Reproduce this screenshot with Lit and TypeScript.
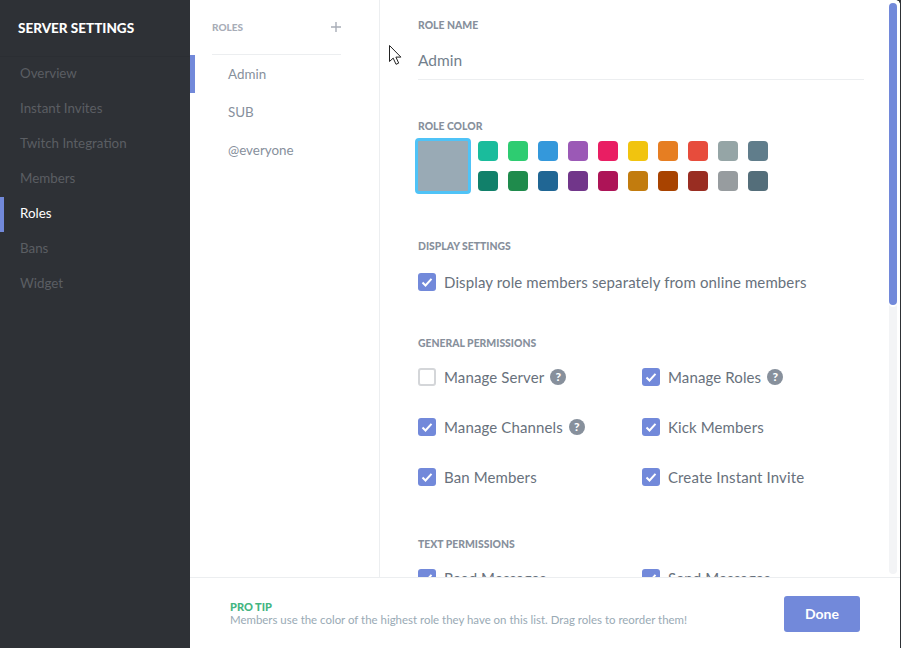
import { LitElement, html, css, svg } from 'lit';
import { customElement } from 'lit/decorators.js';

const NAV = ['Overview', 'Instant Invites', 'Twitch Integration', 'Members', 'Roles', 'Bans', 'Widget'];
const ROLES = ['Admin', 'SUB', '@everyone'];
const COLORS = [
  ['#1abc9c', '#2ecc71', '#3498db', '#9b59b6', '#e91e63', '#f1c40f', '#e67e22', '#e74c3c', '#95a5a6', '#607d8b'],
  ['#11806a', '#1f8b4c', '#206694', '#71368a', '#ad1457', '#c27c0e', '#a84300', '#992d22', '#979c9f', '#546e7a'],
];
const GENERAL = [
  { label: 'Manage Server', checked: false, help: true },
  { label: 'Manage Roles', checked: true, help: true },
  { label: 'Manage Channels', checked: true, help: true },
  { label: 'Kick Members', checked: true, help: false },
  { label: 'Ban Members', checked: true, help: false },
  { label: 'Create Instant Invite', checked: true, help: false },
];
const TEXT = [
  { label: 'Read Messages', checked: true, help: false },
  { label: 'Send Messages', checked: true, help: false },
];

type Perm = { label: string; checked: boolean; help: boolean };

@customElement('app-root')
export class AppRoot extends LitElement {
  static styles = css`
    :host {
      display: block;
      width: 901px;
      height: 648px;
      font-family: Lato, 'Open Sans', sans-serif;
      overflow: hidden;
    }
    .app {
      position: relative;
      display: flex;
      height: 648px;
      background: #fff;
      border-right: 1px solid #2e3136;
      box-sizing: border-box;
    }
    .sidebar {
      width: 190px;
      flex: none;
      background: #2e3136;
    }
    .brand {
      height: 57px;
      box-sizing: border-box;
      padding: 19px 0 0 18px;
      font-size: 13.5px;
      line-height: 18px;
      font-weight: 900;
      color: #fff;
      border-bottom: 1px solid #2b2e33;
    }
    .nav-item {
      height: 35px;
      box-sizing: border-box;
      padding-left: 20px;
      font-size: 13.35px;
      line-height: 33px;
      color: #5b5e63;
    }
    .nav-item.active {
      color: #fff;
      border-left: 4px solid #7289da;
      padding-left: 16px;
    }
    .roles {
      width: 190px;
      flex: none;
      box-sizing: border-box;
      border-right: 1px solid #eceef0;
      padding-top: 18px;
    }
    .roles-head {
      display: flex;
      justify-content: space-between;
      align-items: center;
      height: 37px;
      box-sizing: border-box;
      margin: 0 38px 0 22px;
      padding-bottom: 18px;
      border-bottom: 1px solid #eceef0;
      font-size: 10px;
      font-weight: 900;
      color: #a8adb7;
    }
    .role {
      height: 38px;
      box-sizing: border-box;
      padding-left: 38px;
      font-size: 13.4px;
      line-height: 38px;
      color: #87909c;
    }
    .role.active {
      border-left: 5px solid #7289da;
      padding-left: 33px;
    }
    .main {
      flex: 1;
      min-width: 0;
      padding: 18px 36px 0 38px;
    }
    .label {
      font-size: 10.4px;
      line-height: 14px;
      font-weight: 900;
      color: #87909c;
    }
    .name {
      height: 48px;
      box-sizing: border-box;
      border-bottom: 1px solid #eceef0;
      padding-top: 11px;
      font-size: 15.5px;
      line-height: 34px;
      color: #737f8d;
    }
    .color-label {
      margin-top: 39px;
    }
    .colors {
      display: flex;
      gap: 7px;
      margin: 5px 0 0 -3px;
    }
    .current {
      width: 50px;
      height: 50px;
      border: 3px solid #4fc3f7;
      border-radius: 4px;
      background: #99aab5;
    }
    .swatches {
      display: grid;
      grid-template-columns: repeat(10, 20px);
      grid-auto-rows: 20px;
      gap: 10px;
      padding-top: 3px;
    }
    .swatch {
      border-radius: 4px;
    }
    .display-label {
      margin-top: 45px;
    }
    .check-row {
      display: flex;
      align-items: center;
      height: 18px;
      font-size: 15px;
      letter-spacing: 0.12px;
      color: #68717c;
    }
    .box {
      width: 18px;
      height: 18px;
      margin-right: 8px;
      flex: none;
      box-sizing: border-box;
      border-radius: 3px;
      background: #7289da;
    }
    .box svg {
      display: block;
    }
    .box.off {
      background: #fff;
      border: 2px solid #d4d6d9;
    }
    .help {
      width: 16px;
      height: 16px;
      margin-left: 6px;
      border-radius: 50%;
      background: #87909c;
      color: #fff;
      font-size: 12px;
      line-height: 16px;
      font-weight: 900;
      text-align: center;
    }
    .display-row {
      margin-top: 20px;
    }
    .general-label {
      margin-top: 45px;
    }
    .text-label {
      margin-top: 51px;
    }
    .perms {
      display: grid;
      grid-template-columns: 224px 1fr;
      row-gap: 32px;
      margin-top: 18px;
    }
    .footer {
      position: absolute;
      left: 190px;
      right: 0;
      bottom: 0;
      height: 71px;
      display: flex;
      align-items: center;
      justify-content: space-between;
      box-sizing: border-box;
      padding: 0 40px;
      background: #fff;
      border-top: 1px solid #eceef0;
    }
    .tip {
      margin-top: 1px;
    }
    .tip-title {
      font-size: 11px;
      line-height: 11px;
      font-weight: 900;
      color: #43b581;
    }
    .tip-text {
      padding-top: 1px;
      font-size: 11.45px;
      line-height: 14px;
      color: #99aab5;
    }
    .done {
      width: 76px;
      height: 36px;
      margin-top: 1px;
      border-radius: 3px;
      background: #7289da;
      color: #fff;
      font-size: 14px;
      font-weight: 700;
      line-height: 36px;
      text-align: center;
    }
    .scroll {
      position: absolute;
      top: 3px;
      right: 3px;
      width: 8px;
      height: 571px;
      border-radius: 4px;
      background: #f3f4f6;
    }
    .thumb {
      height: 302px;
      border-radius: 4px;
      background: #7289da;
      box-shadow: 0 2px 0 #fff;
    }
    .corner {
      position: absolute;
      top: 0;
      right: 0;
      width: 4px;
      height: 4px;
      background: radial-gradient(circle at 0 100%, transparent 3.5px, #2e3136 4px);
    }
    .cursor {
      position: absolute;
      left: 388px;
      top: 44px;
    }
  `;

  private tick() {
    return svg`<svg width="18" height="18" viewBox="0 0 18 18"><path d="M4.500 9.500 7.500 12.500 13.500 5.800" fill="none" stroke="#fff" stroke-width="2"/></svg>`;
  }

  private renderPerm(p: Perm) {
    return html`
      <div class="check-row">
        <div class="box ${p.checked ? '' : 'off'}">${p.checked ? this.tick() : ''}</div>
        <span>${p.label}</span>
        ${p.help ? html`<div class="help">?</div>` : ''}
      </div>
    `;
  }

  render() {
    return html`
      <div class="app">
        <div class="sidebar">
          <div class="brand">SERVER SETTINGS</div>
          ${NAV.map((n) => html`<div class="nav-item ${n === 'Roles' ? 'active' : ''}">${n}</div>`)}
        </div>
        <div class="roles">
          <div class="roles-head">
            <span>ROLES</span>
            <svg width="10" height="10" viewBox="0 0 10 10"><path d="M5 0v10M0 5h10" stroke="#a8adb7" stroke-width="1.400"/></svg>
          </div>
          ${ROLES.map((r, i) => html`<div class="role ${i === 0 ? 'active' : ''}">${r}</div>`)}
        </div>
        <div class="main">
          <div class="label">ROLE NAME</div>
          <div class="name">Admin</div>
          <div class="label color-label">ROLE COLOR</div>
          <div class="colors">
            <div class="current"></div>
            <div class="swatches">
              ${COLORS.flat().map((c) => html`<div class="swatch" style="background:${c}"></div>`)}
            </div>
          </div>
          <div class="label display-label">DISPLAY SETTINGS</div>
          <div class="display-row">
            ${this.renderPerm({ label: 'Display role members separately from online members', checked: true, help: false })}
          </div>
          <div class="label general-label">GENERAL PERMISSIONS</div>
          <div class="perms">${GENERAL.map((p) => this.renderPerm(p))}</div>
          <div class="label text-label">TEXT PERMISSIONS</div>
          <div class="perms">${TEXT.map((p) => this.renderPerm(p))}</div>
        </div>
        <div class="footer">
          <div class="tip">
            <div class="tip-title">PRO TIP</div>
            <div class="tip-text">Members use the color of the highest role they have on this list. Drag roles to reorder them!</div>
          </div>
          <div class="done">Done</div>
        </div>
        <div class="scroll"><div class="thumb"></div></div>
        <div class="corner"></div>
        <svg class="cursor" width="15" height="22" viewBox="0 0 15 22">
          <path d="M1.500 1.500v16l3.700-3.400 2.800 6.200 2.700-1.200-2.800-6h5z" fill="#fff" stroke="#222" stroke-width="1"/>
        </svg>
      </div>
    `;
  }
}
